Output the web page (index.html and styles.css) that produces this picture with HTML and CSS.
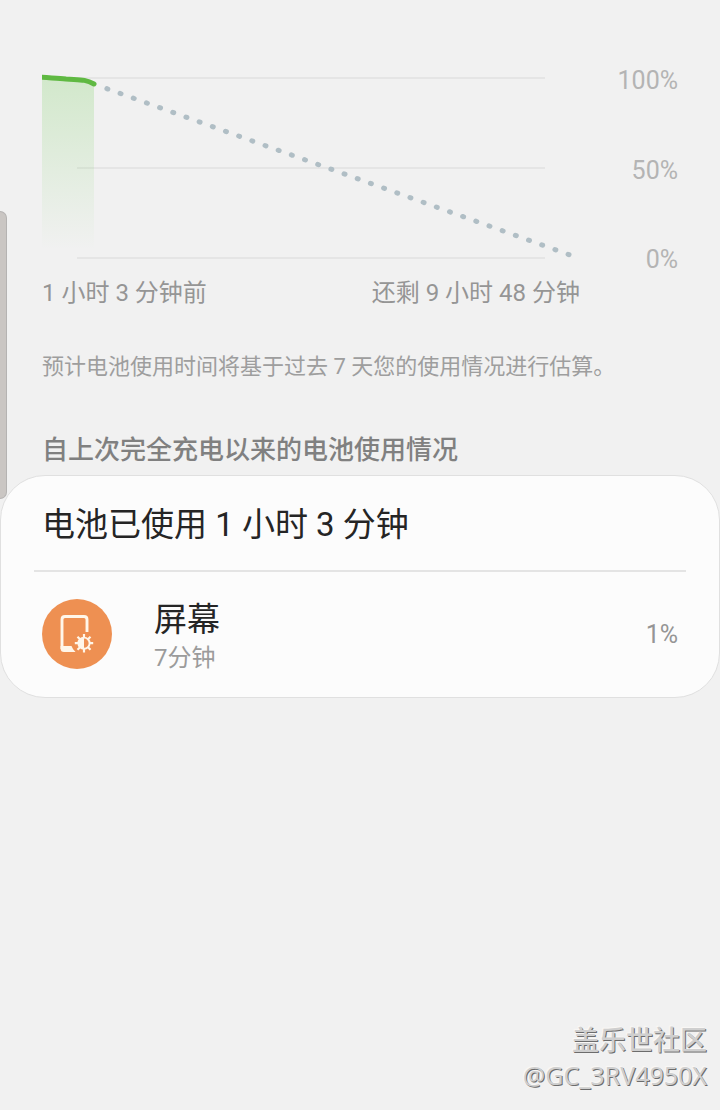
FILE: index.html
```html
<!DOCTYPE html>
<html lang="zh-CN">
<head>
<meta charset="utf-8">
<meta name="viewport" content="width=device-width, initial-scale=1">
<title>电池使用情况</title>
<link rel="stylesheet" href="styles.css">
</head>
<body>
<div class="edge-handle"></div>
<main class="page">
  <section class="forecast">
    <div class="chart">
      <svg class="plot" viewBox="0 0 538 210" role="img" aria-label="电池电量">
        <defs>
          <linearGradient id="level" x1="0" y1="0" x2="0" y2="1">
            <stop offset="0" stop-color="#63c945" stop-opacity=".22"/>
            <stop offset=".5" stop-color="#63c945" stop-opacity=".11"/>
            <stop offset="1" stop-color="#63c945" stop-opacity="0"/>
          </linearGradient>
        </defs>
        <path d="M35 14H503M35 104H503M35 194H503" stroke="#e5e5e5" stroke-width="2"/>
        <path d="M0 14L44 17L52 20V186H0Z" fill="url(#level)"/>
        <path class="plot-forecast" d="M64.9 24.7L528 191"/>
        <path class="plot-used" d="M-4 13C8 14 16 14 24 15C38 16 43 15 52 20"/>
      </svg>
      <div class="scale"><span>100%</span><span>50%</span><span>0%</span></div>
      <div class="times"><span>1 小时 3 分钟前</span><span>还剩 9 小时 48 分钟</span></div>
    </div>
    <p class="note">预计电池使用时间将基于过去 7 天您的使用情况进行估算。</p>
  </section>
  <section class="usage">
    <h2 class="usage-heading">自上次完全充电以来的电池使用情况</h2>
    <div class="card">
      <h3 class="card-title">电池已使用 1 小时 3 分钟</h3>
      <div class="item">
        <svg class="item-icon" viewBox="0 0 70 70" aria-hidden="true">
          <circle cx="35" cy="35" r="35" fill="#ee9052"/>
          <path d="M45 33V20.500Q45 17.500 42 17.500H23Q20 17.500 20 20.500V50" fill="none" stroke="#fff6e9" stroke-width="2.900"/>
          <path d="M18.600 47H29.500Q30.500 50 33.500 53H22Q18.600 53 18.600 49.500Z" fill="#fff6e9"/>
          <path d="M42 35V53.400M32.800 44.200H51.200M35.500 37.700L48.500 50.700M48.500 37.700L35.500 50.700" stroke="#fff6e9" stroke-width="2.200"/>
          <circle cx="42" cy="44.200" r="5.600" fill="#ee9052" stroke="#fff6e9" stroke-width="1.900"/>
          <path d="M42 38.200A6 6 0 0 0 42 50.200Z" fill="#fff6e9"/>
        </svg>
        <div class="item-text">
          <span class="item-name">屏幕</span>
          <span class="item-time">7分钟</span>
        </div>
        <span class="item-percent">1%</span>
      </div>
    </div>
  </section>
  <footer class="watermark">
    <span class="watermark-site">盖乐世社区</span>
    <span class="watermark-user">@GC_3RV4950X</span>
  </footer>
</main>
</body>
</html>
```

FILE: styles.css
```css
* {
  box-sizing: border-box;
}

body {
  margin: 0;
  background: #f1f1f1;
  color: #252525;
  font-family: Roboto, "Noto Sans CJK SC", sans-serif;
}

.page {
  display: flex;
  flex-direction: column;
  min-height: 100vh;
  padding-top: 64px;
}

.edge-handle {
  position: absolute;
  top: 211px;
  left: 0;
  width: 7px;
  height: 288px;
  background: #cac6c3;
  border: 1px solid #b5b3b2;
  border-left: 0;
  border-radius: 0 7px 7px 0;
}

.forecast {
  padding: 0 42px;
}

.chart {
  display: grid;
  grid-template-columns: 1fr 98px;
  row-gap: 3px;
}

.plot {
  display: block;
  width: 100%;
}

.plot .plot-used {
  fill: none;
  stroke: #5fb942;
  stroke-width: 5;
  stroke-linecap: round;
}

.plot .plot-forecast {
  fill: none;
  stroke: #b0bec5;
  stroke-width: 5;
  stroke-linecap: round;
  stroke-dasharray: 1 13;
}

.scale {
  display: flex;
  flex-direction: column;
  justify-content: space-between;
  align-items: flex-end;
  padding-top: 2px;
  color: #b4b4b4;
  font-size: 25px;
  line-height: 29px;
}

.times {
  display: flex;
  justify-content: space-between;
  color: #959595;
  font-size: 24px;
  line-height: 32px;
}

.note {
  margin: 43px 0 0;
  color: #9e9e9e;
  font-size: 22px;
  line-height: 30px;
}

.usage-heading {
  margin: 52px 42px 9px;
  color: #808080;
  font-size: 26px;
  line-height: 32px;
  font-weight: 500;
}

.card {
  position: relative;
  background: #fcfcfc;
  border: 1px solid #e0e0e0;
  border-radius: 45px;
  padding: 0 33px;
}

.card-title {
  margin: 0;
  padding: 24px 8px 20px;
  border-bottom: 2px solid #e4e4e4;
  font-size: 33px;
  line-height: 50px;
  font-weight: 400;
}

.item {
  display: flex;
  align-items: center;
  padding: 22px 8px 23px;
}

.item-icon {
  width: 70px;
  height: 70px;
  margin-right: 42px;
}

.item-text {
  display: flex;
  flex: 1;
  flex-direction: column;
  padding-top: 4px;
}

.item-name {
  font-size: 33px;
  line-height: 44px;
}

.item-time {
  color: #9b9b9b;
  font-size: 24px;
  line-height: 32px;
}

.item-percent {
  color: #959595;
  font-size: 25px;
}

.watermark {
  display: flex;
  flex-direction: column;
  align-items: flex-end;
  margin-top: auto;
  padding: 24px 13px 19px;
  color: #cfcfcf;
  text-shadow: 1px 1px 0 #6c6c6c, -1px -1px 1px #faf8f5;
}

.watermark-site {
  font-size: 27px;
  line-height: 36px;
  font-weight: 500;
}

.watermark-user {
  font-family: "Noto Sans", sans-serif;
  font-size: 25px;
  line-height: 32px;
}
```
